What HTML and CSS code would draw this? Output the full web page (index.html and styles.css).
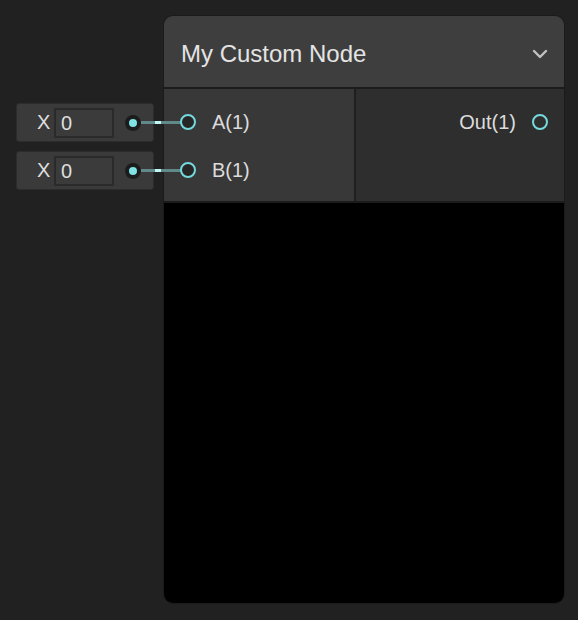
FILE: index.html
```html
<!DOCTYPE html>
<html>
<head>
<meta charset="utf-8">
<link rel="stylesheet" href="styles.css">
</head>
<body>
<div class="canvas">
  <div class="widgets">
    <div class="widget">
      <span class="wlabel">X</span>
      <div class="field">0</div>
      <span class="dot"></span>
      <span class="wire"></span>
    </div>
    <div class="widget">
      <span class="wlabel">X</span>
      <div class="field">0</div>
      <span class="dot"></span>
      <span class="wire"></span>
    </div>
  </div>
  <div class="node">
    <div class="header">
      <span class="title">My Custom Node</span>
      <svg class="chev" width="16" height="10" viewBox="0 0 16 10"><polyline points="2,2 8,8 14,2" fill="none" stroke="#c2c2c2" stroke-width="2.4" stroke-linecap="round" stroke-linejoin="round"/></svg>
    </div>
    <div class="ports">
      <div class="col inputs">
        <div class="port"><span class="ring"></span><span class="plabel">A(1)</span></div>
        <div class="port"><span class="ring"></span><span class="plabel">B(1)</span></div>
      </div>
      <div class="col outputs">
        <div class="port out"><span class="plabel">Out(1)</span><span class="ring"></span></div>
      </div>
    </div>
    <div class="preview"></div>
  </div>
</div>
</body>
</html>
```
FILE: styles.css
```css
html, body {
  margin: 0;
  padding: 0;
  background: #212121;
  font-family: "Liberation Sans", Arial, sans-serif;
}
.canvas {
  display: flex;
  align-items: flex-start;
  gap: 9px;
  padding: 15px 0 0 16px;
}
.widgets {
  display: flex;
  flex-direction: column;
  gap: 9px;
  margin-top: 88px;
  width: 138px;
}
.widget {
  position: relative;
  box-sizing: border-box;
  height: 39px;
  display: flex;
  align-items: center;
  background: #3a3a3a;
  border: 1px solid #2c2c2c;
  border-radius: 3px;
  padding-left: 20px;
}
.wlabel {
  color: #dedede;
  font-size: 20px;
  width: 17px;
}
.field {
  box-sizing: border-box;
  width: 60px;
  height: 30px;
  border: 2px solid #2a2a2a;
  background: #3b3b3b;
  color: #dedede;
  font-size: 20px;
  line-height: 26px;
  padding-left: 5px;
}
.dot {
  position: relative;
  z-index: 3;
  box-sizing: border-box;
  width: 16px;
  height: 16px;
  border-radius: 50%;
  background: #7fe3e6;
  border: 4px solid #1c1c1c;
  margin-left: 11px;
}
.wire {
  position: absolute;
  z-index: 2;
  left: 124px;
  top: 50%;
  margin-top: -2px;
  width: 41px;
  height: 3px;
  background: linear-gradient(to right, #62898a 0, #62898a 14px, #c0f6f6 14px, #c0f6f6 20px, #62898a 20px, #62898a 100%);
}
.node {
  box-sizing: border-box;
  width: 402px;
  height: 589px;
  border: 1px solid #1b1b1b;
  border-radius: 10px;
  overflow: hidden;
  display: flex;
  flex-direction: column;
}
.header {
  box-sizing: border-box;
  height: 73px;
  flex: none;
  background: #3e3e3e;
  border-bottom: 2px solid #1c1c1c;
  display: flex;
  align-items: center;
  justify-content: space-between;
  padding: 4px 16px 0 17px;
}
.title {
  color: #e4e4e4;
  font-size: 24px;
}
.chev {
  display: block;
  margin-top: 1px;
}
.ports {
  flex: none;
  height: 112px;
  display: flex;
  border-bottom: 2px solid #1b1b1b;
}
.col {
  box-sizing: border-box;
  padding: 9px 0 7px;
}
.inputs {
  width: 192px;
  background: #383838;
  border-right: 2px solid #1f1f1f;
  padding-left: 16px;
}
.outputs {
  flex: 1;
  background: #2e2e2e;
  padding-right: 16px;
}
.port {
  height: 48px;
  display: flex;
  align-items: center;
  gap: 16px;
}
.port.out {
  justify-content: flex-end;
}
.ring {
  position: relative;
  z-index: 3;
  box-sizing: border-box;
  width: 16px;
  height: 16px;
  border-radius: 50%;
  border: 2px solid #74d9dd;
  background: #262626;
}
.out .ring {
  background: #2e2e2e;
}
.plabel {
  color: #dcdcdc;
  font-size: 20px;
}
.preview {
  flex: 1;
  background: #000;
}
```
